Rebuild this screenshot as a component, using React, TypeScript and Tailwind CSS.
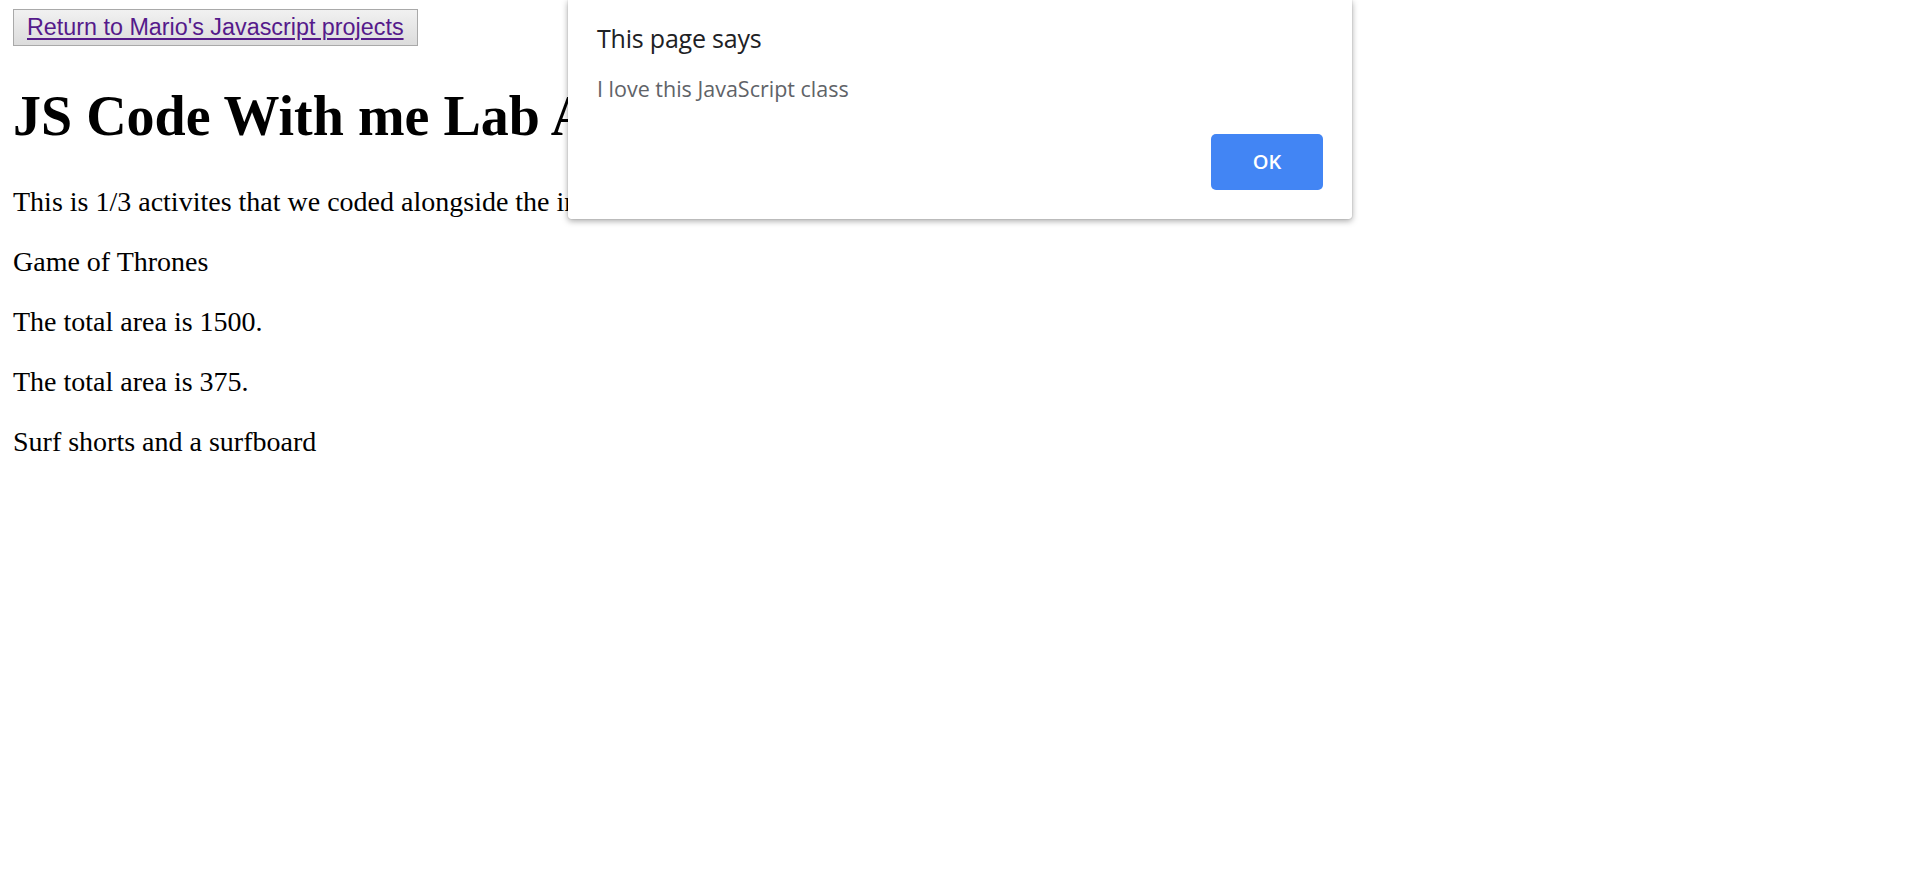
import React from "react";

export default function App() {
  return (
    <div className="relative min-h-screen w-full bg-white text-black">
      <div className="pl-[13px] pt-[9px] font-['Liberation_Serif','Times_New_Roman',serif]">
        <div className="flex">
          <button className="h-[37px] border border-[#a9a9a9] bg-gradient-to-b from-[#f1f1f1] to-[#dcdcdc] px-[13px] font-['Liberation_Sans',Arial,sans-serif] text-[23.33px] leading-[27px] text-[#551a8b] underline decoration-[2px] underline-offset-[3px]">
            Return to Mario's Javascript projects
          </button>
        </div>
        <h1 className="mt-[38px] text-[56px] font-bold leading-[64px]">
          JS Code With me Lab Activities
        </h1>
        <div className="mt-[38px] flex flex-col gap-[28px] text-[28px] leading-[32px]">
          <p>This is 1/3 activites that we coded alongside the instructor.</p>
          <p>Game of Thrones</p>
          <p>The total area is 1500.</p>
          <p>The total area is 375.</p>
          <p>Surf shorts and a surfboard</p>
        </div>
      </div>

      <div className="absolute left-[568px] top-0 w-[784px] rounded-b-[3px] bg-white px-[29px] pb-[29px] pt-[23px] shadow-[0_2px_6px_rgba(0,0,0,0.35),0_0_1px_rgba(0,0,0,0.4)] font-['Open_Sans','Noto_Sans',sans-serif]">
        <div className="text-[25px] leading-[30px] tracking-[-0.2px] text-[#202124]">This page says</div>
        <div className="mt-[22px] text-[21.5px] leading-[28px] text-[#5f6368]">
          I love this JavaScript class
        </div>
        <div className="mt-[31px] flex justify-end">
          <button className="flex h-[56px] w-[112px] items-center justify-center rounded-[5px] bg-[#4285f4] text-[20px] font-semibold text-white">
            OK
          </button>
        </div>
      </div>
    </div>
  );
}
